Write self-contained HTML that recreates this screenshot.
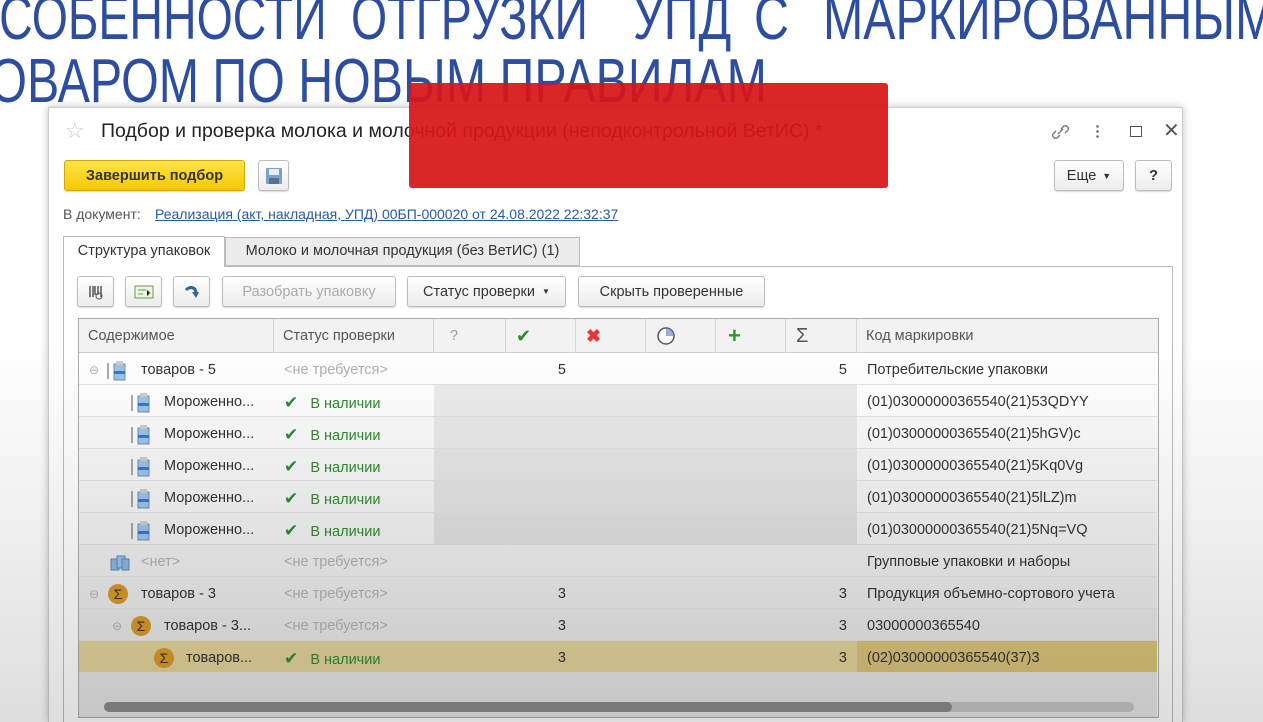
<!DOCTYPE html>
<html><head><meta charset="utf-8"><style>
*{margin:0;padding:0;box-sizing:border-box}
html,body{width:1263px;height:722px;overflow:hidden}
body{background:#fff;font-family:"Liberation Sans",sans-serif;position:relative;color:#333}
.t{position:absolute;white-space:nowrap;color:#2c4da0;font-size:62px;transform-origin:0 0;transform:scaleX(0.78);font-weight:normal}
.abs{position:absolute}
.win{position:absolute;left:48px;top:107px;width:1135px;height:615px;background:#fff;box-shadow:0 0 8px rgba(0,0,0,.25);border:1px solid #ccc;border-bottom:none;overflow:hidden}
.btn{position:absolute;height:31px;border:1px solid #bdbdbd;border-radius:3px;background:linear-gradient(#fff,#ececec);font-size:14.5px;color:#333;display:flex;align-items:center;justify-content:center;box-shadow:0 1px 1px rgba(0,0,0,.15)}
.row{position:absolute;left:79px;width:1078px;height:32px;border-bottom:1px solid #e2e2e2;font-size:14.5px}
.c{position:absolute;top:2px;height:31px;line-height:31px;white-space:nowrap}
.gray{color:#b0b0b0}
.grn{color:#2e8b2e}
.num{text-align:right}
.hd{position:absolute;top:0;height:34px;line-height:34px;border-right:1px solid #d6d6d6;font-size:14.5px;color:#555;padding-left:9px}
</style></head><body>
<div class="t" style="left:-37px;top:-17px;transform:scaleX(0.75)">ОСОБЕННОСТИ</div>
<div class="t" style="left:351px;top:-17px;transform:scaleX(0.75)">ОТГРУЗКИ</div>
<div class="t" style="left:633px;top:-17px">УПД</div>
<div class="t" style="left:754px;top:-17px">С</div>
<div class="t" style="left:823px;top:-17px">МАРКИРОВАННЫМ</div>
<div class="t" style="left:-38px;top:46px">ТОВАРОМ ПО НОВЫМ ПРАВИЛАМ</div>

<div class="win">
  <div class="abs" style="left:16px;top:10px;font-size:22px;color:#ccc">☆</div>
  <div class="abs" style="left:52px;top:12px;font-size:19.5px;color:#222;white-space:nowrap">Подбор и проверка молока и молочной продукции (неподконтрольной ВетИС) *</div>
  <svg class="abs" style="left:1000px;top:14px" width="22" height="20" viewBox="0 0 22 20"><path d="M9 12l5-5M7 9l-3 3a3 3 0 0 0 4 4l3-3M12 7l3-3a3 3 0 0 1 4 4l-3 3" stroke="#777" stroke-width="1.4" fill="none"/></svg>
  <div class="abs" style="left:1047px;top:16px;width:3px;height:14px;background:radial-gradient(circle,#777 1.2px,transparent 1.5px) 0 0/3px 5px"></div>
  <div class="abs" style="left:1081px;top:18px;width:12px;height:11px;border:1.5px solid #555"></div>
  <div class="abs" style="left:1114px;top:10px;font-size:20px;color:#555">✕</div>

  <div class="btn" style="left:15px;top:52px;width:181px;background:linear-gradient(#ffe34a,#f5c800);border-color:#d4a800;font-weight:bold;color:#333">Завершить подбор</div>
  <div class="btn" style="left:209px;top:52px;width:31px"><svg width="18" height="18" viewBox="0 0 18 18"><rect x="1" y="1" width="16" height="16" rx="1" fill="#7aa0cc"/><rect x="4" y="2" width="10" height="6" fill="#e8eef6"/><rect x="4" y="11" width="10" height="6" fill="#5a6f8a"/></svg></div>
  <div class="btn" style="left:1005px;top:52px;width:70px">Еще <span style="font-size:9px;margin-left:6px">▼</span></div>
  <div class="btn" style="left:1086px;top:52px;width:37px;font-weight:bold">?</div>

  <div class="abs" style="left:14px;top:98px;font-size:14px;color:#555">В документ:</div>
  <div class="abs" style="left:106px;top:98px;font-size:14px;color:#2a59a8;text-decoration:underline">Реализация (акт, накладная, УПД) 00БП-000020 от 24.08.2022 22:32:37</div>

  <div class="abs" style="left:14px;top:128px;width:162px;height:31px;border:1px solid #bbb;border-bottom:none;background:#fff;font-size:14.5px;line-height:29px;text-align:center;color:#333;z-index:2">Структура упаковок</div>
  <div class="abs" style="left:176px;top:129px;width:355px;height:29px;border:1px solid #bbb;background:#ececec;font-size:14.5px;line-height:27px;text-align:center;color:#333">Молоко и молочная продукция (без ВетИС) (1)</div>
  <div class="abs" style="left:14px;top:158px;width:1110px;height:470px;border:1px solid #bbb"></div>

  <div class="btn" style="left:28px;top:168px;width:37px"><svg width="18" height="18"><path d="M3 3v11M6 3v11M8 3v9M11 3v9M14 3v11" stroke="#555" stroke-width="1.5"/><circle cx="12" cy="13" r="3" fill="none" stroke="#555"/></svg></div>
  <div class="btn" style="left:76px;top:168px;width:37px"><svg width="20" height="16"><rect x="1" y="2" width="18" height="12" fill="#eef5e6" stroke="#6a9a4a"/><path d="M4 6h8M4 10h5M13 6l3 3-3 3" stroke="#6a9a4a"/></svg></div>
  <div class="btn" style="left:124px;top:168px;width:37px"><svg width="16" height="16"><path d="M2 6c4-4 9-3 10 2" stroke="#2a66a8" stroke-width="3" fill="none"/><path d="M8 8l7 0-3 6z" fill="#2a66a8"/></svg></div>
  <div class="btn" style="left:173px;top:168px;width:174px;color:#aaa">Разобрать упаковку</div>
  <div class="btn" style="left:358px;top:168px;width:159px">Статус проверки <span style="font-size:8px;margin-left:7px">▼</span></div>
  <div class="btn" style="left:529px;top:168px;width:187px">Скрыть проверенные</div>
</div>

<div class="abs" style="left:78px;top:318px;width:1081px;height:400px;border:1px solid #aaa;background:#fff">
  <div class="abs" style="left:0;top:0;width:1079px;height:34px;background:#f2f2f2;border-bottom:1px solid #ccc">
    <div class="hd" style="left:0;width:195px">Содержимое</div>
    <div class="hd" style="left:195px;width:160px">Статус проверки</div>
    <div class="hd" style="left:355px;width:72px;color:#999;padding-left:16px">?</div>
    <div class="hd" style="left:427px;width:70px;color:#2a8c2a;font-size:18px;padding-left:10px">✔</div>
    <div class="hd" style="left:497px;width:70px;color:#e33;font-size:18px;padding-left:10px;font-weight:bold">✖</div>
    <div class="hd" style="left:567px;width:70px;padding-left:10px"><svg width="20" height="20" style="margin-top:7px"><circle cx="10" cy="10" r="8" fill="#fff" stroke="#556" stroke-width="1.5"/><path d="M10 10V2.5A7.5 7.5 0 0 1 17.5 10z" fill="#9ab0dc"/></svg></div>
    <div class="hd" style="left:637px;width:70px;color:#2a9a2a;font-size:22px;font-weight:bold;padding-left:12px">+</div>
    <div class="hd" style="left:707px;width:71px;color:#555;font-size:20px;padding-left:10px">Σ</div>
    <div class="hd" style="left:778px;width:301px;border:none">Код маркировки</div>
  </div>
</div>

<div class="row" style="top:353px;background:#fff">
  <div class="c gray" style="left:10px;font-size:12px">⊖</div>
  <div class="c" style="left:28px"><svg width="20" height="22" style="vertical-align:middle"><path d="M1 4v16" stroke="#555"/><rect x="7" y="5" width="11" height="16" fill="#9cc3e8" stroke="#6a8fb8"/><rect x="9" y="2" width="7" height="4" fill="#ccc"/><rect x="7" y="12" width="11" height="3" fill="#3a78c0"/></svg></div>
  <div class="c" style="left:62px">товаров - 5</div>
  <div class="c gray" style="left:205px">&lt;не требуется&gt;</div>
  <div class="c num" style="left:427px;width:60px">5</div>
  <div class="c num" style="left:707px;width:61px">5</div>
  <div class="c" style="left:788px">Потребительские упаковки</div>
</div>
<div class="row" style="top:385px;background:#fff"><div class="abs" style="left:355px;width:423px;height:31px;background:#ececec"></div><div class="c" style="left:52px"><svg width="20" height="22" style="vertical-align:middle"><path d="M1 4v16" stroke="#555"/><rect x="7" y="5" width="11" height="16" fill="#9cc3e8" stroke="#6a8fb8"/><rect x="9" y="2" width="7" height="4" fill="#ccc"/><rect x="7" y="12" width="11" height="3" fill="#3a78c0"/></svg></div><div class="c" style="left:85px">Мороженно...</div><div class="c grn" style="left:205px"><span style="font-size:17px">✔</span>&nbsp;&nbsp; В наличии</div><div class="c" style="left:788px">(01)03000000365540(21)53QDYY</div></div>
<div class="row" style="top:417px;background:#fbfbfb"><div class="abs" style="left:355px;width:423px;height:31px;background:#e9e9e9"></div><div class="c" style="left:52px"><svg width="20" height="22" style="vertical-align:middle"><path d="M1 4v16" stroke="#555"/><rect x="7" y="5" width="11" height="16" fill="#9cc3e8" stroke="#6a8fb8"/><rect x="9" y="2" width="7" height="4" fill="#ccc"/><rect x="7" y="12" width="11" height="3" fill="#3a78c0"/></svg></div><div class="c" style="left:85px">Мороженно...</div><div class="c grn" style="left:205px"><span style="font-size:17px">✔</span>&nbsp;&nbsp; В наличии</div><div class="c" style="left:788px">(01)03000000365540(21)5hGV)c</div></div>
<div class="row" style="top:449px;background:#f8f8f8"><div class="abs" style="left:355px;width:423px;height:31px;background:#e6e6e6"></div><div class="c" style="left:52px"><svg width="20" height="22" style="vertical-align:middle"><path d="M1 4v16" stroke="#555"/><rect x="7" y="5" width="11" height="16" fill="#9cc3e8" stroke="#6a8fb8"/><rect x="9" y="2" width="7" height="4" fill="#ccc"/><rect x="7" y="12" width="11" height="3" fill="#3a78c0"/></svg></div><div class="c" style="left:85px">Мороженно...</div><div class="c grn" style="left:205px"><span style="font-size:17px">✔</span>&nbsp;&nbsp; В наличии</div><div class="c" style="left:788px">(01)03000000365540(21)5Kq0Vg</div></div>
<div class="row" style="top:481px;background:#f5f5f5"><div class="abs" style="left:355px;width:423px;height:31px;background:#e3e3e3"></div><div class="c" style="left:52px"><svg width="20" height="22" style="vertical-align:middle"><path d="M1 4v16" stroke="#555"/><rect x="7" y="5" width="11" height="16" fill="#9cc3e8" stroke="#6a8fb8"/><rect x="9" y="2" width="7" height="4" fill="#ccc"/><rect x="7" y="12" width="11" height="3" fill="#3a78c0"/></svg></div><div class="c" style="left:85px">Мороженно...</div><div class="c grn" style="left:205px"><span style="font-size:17px">✔</span>&nbsp;&nbsp; В наличии</div><div class="c" style="left:788px">(01)03000000365540(21)5lLZ)m</div></div>
<div class="row" style="top:513px;background:#f2f2f2"><div class="abs" style="left:355px;width:423px;height:31px;background:#e0e0e0"></div><div class="c" style="left:52px"><svg width="20" height="22" style="vertical-align:middle"><path d="M1 4v16" stroke="#555"/><rect x="7" y="5" width="11" height="16" fill="#9cc3e8" stroke="#6a8fb8"/><rect x="9" y="2" width="7" height="4" fill="#ccc"/><rect x="7" y="12" width="11" height="3" fill="#3a78c0"/></svg></div><div class="c" style="left:85px">Мороженно...</div><div class="c grn" style="left:205px"><span style="font-size:17px">✔</span>&nbsp;&nbsp; В наличии</div><div class="c" style="left:788px">(01)03000000365540(21)5Nq=VQ</div></div>
<div class="row" style="top:545px;background:#eeeeee">
  <div class="c" style="left:30px"><svg width="22" height="20" style="vertical-align:middle"><rect x="2" y="7" width="8" height="11" fill="#8db8e0" stroke="#5a88b8"/><rect x="8" y="4" width="8" height="12" fill="#9cc3e8" stroke="#5a88b8"/><rect x="13" y="7" width="7" height="11" fill="#8db8e0" stroke="#5a88b8"/></svg></div>
  <div class="c gray" style="left:62px">&lt;нет&gt;</div>
  <div class="c gray" style="left:205px">&lt;не требуется&gt;</div>
  <div class="c" style="left:788px">Групповые упаковки и наборы</div>
</div>
<div class="row" style="top:577px;background:#ebebeb">
  <div class="c gray" style="left:10px;font-size:12px">⊖</div>
  <div class="c" style="left:29px"><span style="display:inline-block;width:20px;height:20px;border-radius:50%;background:#d89a2a;text-align:center;line-height:20px;font-size:14px;color:#333;vertical-align:middle">Σ</span></div>
  <div class="c" style="left:62px">товаров - 3</div>
  <div class="c gray" style="left:205px">&lt;не требуется&gt;</div>
  <div class="c num" style="left:427px;width:60px">3</div>
  <div class="c num" style="left:707px;width:61px">3</div>
  <div class="c" style="left:788px">Продукция объемно-сортового учета</div>
</div>
<div class="row" style="top:609px;background:#e8e8e8">
  <div class="c gray" style="left:33px;font-size:12px">⊖</div>
  <div class="c" style="left:52px"><span style="display:inline-block;width:20px;height:20px;border-radius:50%;background:#d89a2a;text-align:center;line-height:20px;font-size:14px;color:#333;vertical-align:middle">Σ</span></div>
  <div class="c" style="left:85px">товаров - 3...</div>
  <div class="c gray" style="left:205px">&lt;не требуется&gt;</div>
  <div class="c num" style="left:427px;width:60px">3</div>
  <div class="c num" style="left:707px;width:61px">3</div>
  <div class="c" style="left:788px">03000000365540</div>
</div>
<div class="row" style="top:641px;background:#e2d39a">
  <div class="abs" style="left:778px;width:300px;height:31px;background:#d9c27a"></div>
  <div class="c" style="left:75px"><span style="display:inline-block;width:20px;height:20px;border-radius:50%;background:#d89a2a;text-align:center;line-height:20px;font-size:14px;color:#333;vertical-align:middle">Σ</span></div>
  <div class="c" style="left:107px">товаров...</div>
  <div class="c grn" style="left:205px"><span style="font-size:17px">✔</span>&nbsp;&nbsp; В наличии</div>
  <div class="c num" style="left:427px;width:60px">3</div>
  <div class="c num" style="left:707px;width:61px">3</div>
  <div class="c" style="left:788px">(02)03000000365540(37)3</div>
</div>
<div class="abs" style="left:79px;top:673px;width:1078px;height:44px;background:#e4e4e4"></div>
<div class="abs" style="left:104px;top:702px;width:1030px;height:10px;border-radius:5px;background:#c4c4c4"></div>
<div class="abs" style="left:104px;top:702px;width:848px;height:10px;border-radius:5px;background:#8a8a8a"></div>

<div class="abs" style="left:0;top:0;width:1263px;height:722px;pointer-events:none;background:linear-gradient(rgba(0,0,0,0) 0px,rgba(0,0,0,0) 340px,rgba(0,0,0,.13) 722px)"></div>
<div class="abs" style="left:409px;top:83px;width:479px;height:105px;background:rgba(216,22,24,.93);border-radius:3px"></div>
</body></html>
